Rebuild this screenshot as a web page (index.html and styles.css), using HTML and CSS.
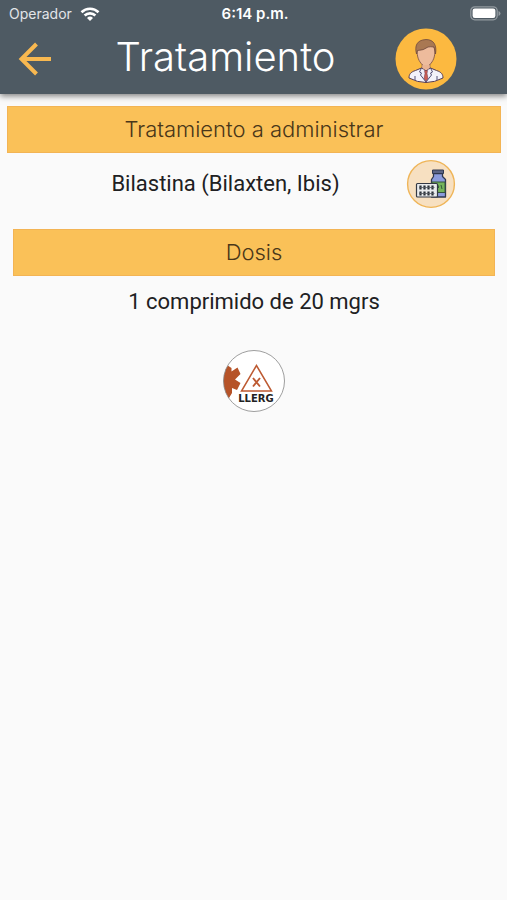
FILE: index.html
```html
<!DOCTYPE html>
<html lang="es">
<head>
<meta charset="utf-8">
<meta name="viewport" content="width=device-width, initial-scale=1">
<title>Tratamiento</title>
<link rel="stylesheet" href="styles.css">
</head>
<body>
<header class="app-bar">
  <div class="status">
    <div class="carrier">
      <span>Operador</span>
      <svg width="20" height="14" viewBox="0 0 20 14" fill="none" stroke="#fff" stroke-width="2.6" aria-hidden="true">
        <path d="M1.5 5.2a12.2 12.2 0 0 1 17 0M4.6 8.5a7.8 7.8 0 0 1 10.800 0"/>
        <path d="M7 10.900a4.300 4.300 0 0 1 6 0L10 14z" fill="#fff" stroke="none"/>
      </svg>
    </div>
    <time class="clock">6:14 p.m.</time>
    <svg class="battery" width="31" height="15" viewBox="0 0 31 15" aria-hidden="true">
      <rect x=".8" y=".8" width="26.400" height="13" rx="4" fill="none" stroke="#929aa0" stroke-width="1.300"/>
      <rect x="2.600" y="2.600" width="22.800" height="9.400" rx="2.200" fill="#fff"/>
      <path d="M28.500 5v5q2-.8 2-2.500t-2-2.500" fill="#929aa0"/>
    </svg>
  </div>
  <div class="nav">
    <button class="back" type="button" aria-label="Volver">
      <svg width="34" height="34" viewBox="0 0 34 34" fill="none" stroke="#f8b850" stroke-width="4" aria-hidden="true">
        <path d="M33 17H4M18.500 2L3.500 17l15 15"/>
      </svg>
    </button>
    <h1>Tratamiento</h1>
    <button class="avatar" type="button" aria-label="Perfil">
      <svg width="62" height="62" viewBox="0 0 62 62" stroke-linejoin="round" aria-hidden="true">
        <circle cx="31" cy="31" r="30.500" fill="#fcb940"/>
        <path d="M27 35v7l4 4 4-4v-7z" fill="#e9b393" stroke="#744b43" stroke-width=".6"/>
        <path d="M22 21c0 9 2 12 5 15.500q4 4 8 0c3-3.500 5-6.500 5-15.500l-3-5H25z" fill="#edbb9c" stroke="#744b43" stroke-width=".8"/>
        <path d="M27.500 37v5l3.500 3 3.500-3v-5z" fill="#e9b393"/>
        <path d="M21.500 26c-2-8 0-14 9.500-14.500 8 0 11 6 9.500 14.500l-1.500-7q-3.500-.5-6 0-4.500 3.500-10.500 3.500z" fill="#a97852" stroke="#704a3d" stroke-width=".8"/>
        <path d="M26.500 40l-6 2.500c-5 1.500-6.500 4-6.500 7.500q17 9 34 0c0-3.500-1.500-6-6.500-7.500l-6-2.500-4.500 3z" fill="#f3f2fa" stroke="#553b52"/>
        <path d="M28 41l3 3 3-3-1 11-2 2-2-2z" fill="#e9ecfa"/>
        <path d="M29.500 42.500h3l-.5 3 1 5-2 3-2-3 1-5z" fill="#cb5c54" stroke="#713844" stroke-width=".5"/>
        <path d="M26.500 40l-2 4 2 1-1 2 5.500 7 5.500-7-1-2 2-1-2-4M20 48v4M42 48v4" fill="none" stroke="#535078"/>
      </svg>
    </button>
  </div>
</header>
<main>
  <section class="treatment">
    <h2 class="band">Tratamiento a administrar</h2>
    <div class="drug">
      <p class="value">Bilastina (Bilaxten, Ibis)</p>
      <button class="medicine" type="button" aria-label="Medicamento">
        <svg width="50" height="50" viewBox="0 0 50 50" stroke-linejoin="round" aria-hidden="true">
          <circle cx="25" cy="25" r="23.400" fill="#f7e0c1" stroke="#efb558" stroke-width="1.400"/>
          <path d="M27.500 14.500h9v3l3 3v17.500H25.500V20.500l2-3z" fill="#8b9bdc" stroke="#30384f" stroke-width="1.300"/>
          <path d="M26.500 11h11v3.500h-11z" fill="#5c6485" stroke="#30384f"/>
          <path d="M26 23h13v10.500H26z" fill="#75b55b" stroke="#35543d"/>
          <path d="M31 25l2 3-2 2m4-4 1 4" fill="none" stroke="#315b3a"/>
          <rect x="10.500" y="24.500" width="21" height="13.500" rx="1" fill="#e9ebed" stroke="#343944" stroke-width="1.200"/>
          <path d="M14.500 26.500v4M18.500 26.500v4M22.500 26.500v4M26.500 26.500v4M14.500 32.500v4M18.500 32.500v4M22.500 32.500v4M26.500 32.500v4" stroke="#292f37" stroke-width="2.200"/>
          <path d="M13 28.500h15.500M13 34.500h15.500" stroke="#555b62" stroke-width=".8"/>
        </svg>
      </button>
    </div>
  </section>
  <section class="dose">
    <h2 class="band">Dosis</h2>
    <p class="value">1 comprimido de 20 mgrs</p>
  </section>
  <a class="brand" href="#" aria-label="Inicio">
    <svg width="64" height="64" viewBox="0 0 64 64" aria-hidden="true">
      <defs><clipPath id="disc"><circle cx="32" cy="32" r="30.500"/></clipPath></defs>
      <circle cx="32" cy="32" r="30.500" fill="#fff"/>
      <path clip-path="url(#disc)" d="M0 16h5l4.500 3v3.500l6-4 3 6.500-5.500 5.500 5.500 3.500-3.500 7-5-2v5L7 49H0z" fill="#b65328"/>
      <circle cx="32" cy="32" r="30.500" fill="none" stroke="#858585" stroke-width=".8"/>
      <path d="M34.500 16.500L19.500 42h30z" fill="none" stroke="#bd5a32" stroke-width="1.500"/>
      <path d="M31 29l7 8.500m0-8.500L31 37.500" stroke="#bd5a32" stroke-width="1.900"/>
      <text class="brand-name" x="34" y="52.500" text-anchor="middle">LLERG</text>
    </svg>
  </a>
</main>
</body>
</html>
```
FILE: styles.css
```css
* { box-sizing: border-box; }
body {
  margin: 0;
  min-height: 100vh;
  background: #fafafa;
  color: #202022;
  font-family: Inter, "Liberation Sans", sans-serif;
}
h1, h2, p { margin: 0; }
svg { display: block; }
button { padding: 0; border: 0; background: none; cursor: pointer; }
.app-bar {
  background: #4e5a63;
  color: #fff;
  box-shadow: 0 2px 6px rgba(0, 0, 0, .5);
}
.status {
  display: grid;
  grid-template-columns: 1fr auto 1fr;
  align-items: center;
  height: 27px;
  padding: 0 6px 0 9px;
}
.carrier { display: flex; align-items: center; gap: 8px; color: #e2e5e8; font-size: 14px; }
.clock { font-size: 15px; font-weight: 600; }
.battery { justify-self: end; }
.nav {
  display: grid;
  grid-template-columns: 38px 1fr 62px;
  align-items: center;
  height: 67px;
  padding: 0 50px 3px 18px;
}
h1 {
  font-size: 40px;
  font-weight: 300;
  line-height: 56px;
  padding-bottom: 4px;
  text-align: center;
}
main { display: flex; flex-direction: column; padding: 12px 6px 12px 7px; }
.band {
  background: #fac158;
  border: 1px solid #f3b454;
  color: #493619;
  font-size: 22px;
  font-weight: 300;
  line-height: 45px;
  text-align: center;
}
.value {
  font-family: Roboto, "Liberation Sans", sans-serif;
  font-size: 22px;
  font-weight: 400;
  line-height: 52px;
  text-align: center;
}
.drug {
  display: grid;
  grid-template-columns: 1fr 50px;
  align-items: center;
  min-height: 62px;
  padding: 0 45px 0 38px;
}
.dose { padding: 14px 6px 0; }
.brand { align-self: center; margin-top: 21px; }
.brand-name { font-family: "DejaVu Sans", sans-serif; font-size: 10px; font-weight: 700; fill: #222; }
```
